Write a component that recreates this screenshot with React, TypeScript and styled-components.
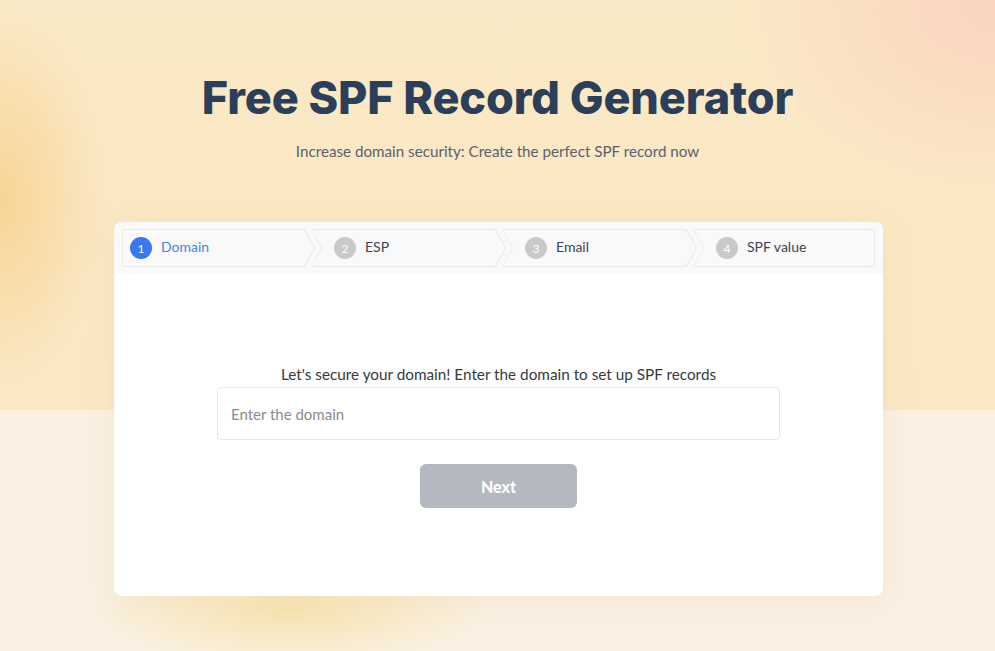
import React, { useState } from 'react';
import styled, { createGlobalStyle } from 'styled-components';

const GlobalStyle = createGlobalStyle`
  html, body {
    margin: 0;
    padding: 0;
  }
  body {
    font-family: Lato, "Noto Sans", sans-serif;
    background: #faf1e3;
  }
  * {
    box-sizing: border-box;
  }
`;

const Page = styled.div`
  min-height: 651px;
  display: flex;
  flex-direction: column;
  align-items: center;
  padding-top: 70px;
  background:
    radial-gradient(ellipse 110px 190px at 0px 200px, rgba(247, 204, 130, 0.7), rgba(247, 204, 130, 0) 100%),
    radial-gradient(ellipse 260px 200px at 995px 0px, rgba(250, 210, 190, 0.9), rgba(250, 210, 190, 0) 100%),
    radial-gradient(ellipse 200px 60px at 290px 610px, rgba(247, 226, 170, 0.9), rgba(247, 226, 170, 0) 100%),
    linear-gradient(to bottom, #fae9c6 0, #fae8c5 410px, #faf1e3 410px, #faf1e3 100%);
`;

const Title = styled.h1`
  margin: 0;
  font-family: Inter, "Noto Sans", sans-serif;
  font-weight: 800;
  font-size: 45px;
  line-height: 56px;
  letter-spacing: -0.1px;
  color: #2b3f5b;
`;

const Subtitle = styled.p`
  margin: 14px 0 0;
  font-size: 15.2px;
  line-height: 22px;
  color: #5a616d;
`;

const Card = styled.div`
  margin: 60px 0 0 2px;
  width: 769px;
  background: #fff;
  border-radius: 8px;
  overflow: hidden;
  box-shadow: 0 4px 30px rgba(230, 200, 150, 0.25);
`;

const StepBar = styled.div`
  display: grid;
  grid-template-columns: 193px 191px 191px 1fr;
  padding: 7px 8px;
  background: #f9f9f9;
`;

type Pos = 'first' | 'mid' | 'last';

const shapeFor = (pos: Pos) =>
  pos === 'first'
    ? 'polygon(0 0, calc(100% - 10px) 0, 100% 50%, calc(100% - 10px) 100%, 0 100%)'
    : pos === 'mid'
      ? 'polygon(0 0, calc(100% - 10px) 0, 100% 50%, calc(100% - 10px) 100%, 0 100%, 10px 50%)'
      : 'polygon(0 0, 100% 0, 100% 100%, 0 100%, 10px 50%)';

const StepOuter = styled.div<{ $pos: Pos }>`
  height: 38px;
  padding: 1px;
  margin-left: ${({ $pos }) => ($pos === 'first' ? '0' : '-4px')};
  background: #e9e9e9;
  clip-path: ${({ $pos }) => shapeFor($pos)};
  border-radius: ${({ $pos }) =>
    $pos === 'first' ? '4px 0 0 4px' : $pos === 'last' ? '0 4px 4px 0' : '0'};
`;

const StepInner = styled.div<{ $pos: Pos }>`
  height: 100%;
  display: flex;
  align-items: center;
  gap: 9px;
  padding-left: ${({ $pos }) => ($pos === 'first' ? '7px' : '22px')};
  background: #f9f9f9;
  clip-path: ${({ $pos }) => shapeFor($pos)};
  border-radius: ${({ $pos }) =>
    $pos === 'first' ? '3px 0 0 3px' : $pos === 'last' ? '0 3px 3px 0' : '0'};
`;

const StepNum = styled.span<{ $active: boolean }>`
  width: 22px;
  height: 22px;
  border-radius: 50%;
  display: flex;
  align-items: center;
  justify-content: center;
  font-size: 12px;
  color: #fff;
  background: ${({ $active }) => ($active ? '#3a77f2' : '#c9c9c9')};
`;

const StepLabel = styled.span<{ $active: boolean }>`
  font-size: 14px;
  margin-bottom: 4px;
  color: ${({ $active }) => ($active ? '#4a7ff0' : '#3d4255')};
`;

const Body = styled.div`
  display: flex;
  flex-direction: column;
  align-items: center;
  padding: 90px 0 88px;
`;

const Prompt = styled.label`
  font-size: 15.3px;
  line-height: 20px;
  color: #363a42;
  margin-bottom: 3px;
`;

const DomainInput = styled.input`
  width: 563px;
  height: 53px;
  padding: 0 13px;
  border: 1px solid #e6e6e6;
  border-radius: 4px;
  font-family: Lato, "Noto Sans", sans-serif;
  font-size: 15px;
  color: #333;
  outline: none;

  &::placeholder {
    color: #878c94;
  }
`;

const NextButton = styled.button`
  margin-top: 24px;
  width: 157px;
  height: 44px;
  border: none;
  border-radius: 6px;
  background: #b4b9c1;
  color: #fff;
  font-family: Lato, "Noto Sans", sans-serif;
  font-weight: 900;
  font-size: 16px;
  cursor: pointer;
`;

const steps = ['Domain', 'ESP', 'Email', 'SPF value'];

const App: React.FC = () => {
  const [domain, setDomain] = useState('');
  const current = 0;

  return (
    <>
      <GlobalStyle />
      <Page>
        <Title>Free SPF Record Generator</Title>
        <Subtitle>Increase domain security: Create the perfect SPF record now</Subtitle>
        <Card>
          <StepBar>
            {steps.map((label, i) => {
              const pos: Pos = i === 0 ? 'first' : i === steps.length - 1 ? 'last' : 'mid';
              return (
                <StepOuter key={label} $pos={pos}>
                  <StepInner $pos={pos}>
                    <StepNum $active={i === current}>{i + 1}</StepNum>
                    <StepLabel $active={i === current}>{label}</StepLabel>
                  </StepInner>
                </StepOuter>
              );
            })}
          </StepBar>
          <Body>
            <Prompt htmlFor="domain">Let's secure your domain! Enter the domain to set up SPF records</Prompt>
            <DomainInput
              id="domain"
              type="text"
              value={domain}
              onChange={(e) => setDomain(e.target.value)}
              placeholder="Enter the domain"
            />
            <NextButton type="button">Next</NextButton>
          </Body>
        </Card>
      </Page>
    </>
  );
};

export default App;
